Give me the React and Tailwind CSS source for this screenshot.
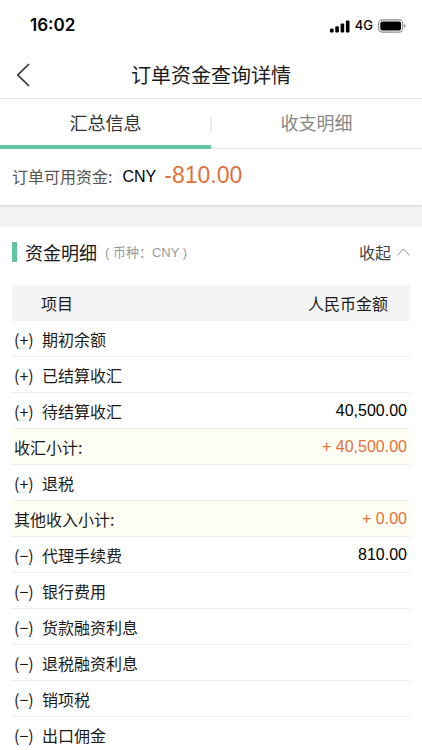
import { useState } from 'react';

const rows = [
  { sign: '+', name: '期初余额' },
  { sign: '+', name: '已结算收汇' },
  { sign: '+', name: '待结算收汇', amount: '40,500.00' },
  { subtotal: true, name: '收汇小计:', amount: '+ 40,500.00' },
  { sign: '+', name: '退税' },
  { subtotal: true, name: '其他收入小计:', amount: '+ 0.00' },
  { sign: '−', name: '代理手续费', amount: '810.00' },
  { sign: '−', name: '银行费用' },
  { sign: '−', name: '货款融资利息' },
  { sign: '−', name: '退税融资利息' },
  { sign: '−', name: '销项税' },
  { sign: '−', name: '出口佣金' },
];

const tabs = ['汇总信息', '收支明细'];

function StatusBar() {
  return (
    <div className="flex h-[52px] shrink-0 items-center justify-between pl-[30px] pr-4 text-black">
      <span className="font-['Inter',sans-serif] text-[17px] font-semibold">16:02</span>
      <div className="flex items-center gap-[5px]">
        <svg width="20" height="13" viewBox="0 0 20 13" fill="currentColor" aria-hidden="true">
          <rect x="0" y="8.5" width="3.6" height="4" rx="1" />
          <rect x="5.3" y="6.3" width="3.6" height="6.2" rx="1" />
          <rect x="10.6" y="3.6" width="3.6" height="8.9" rx="1" />
          <rect x="15.9" y="0.6" width="3.6" height="11.9" rx="1" />
        </svg>
        <span className="font-['Inter',sans-serif] text-[13px] font-medium">4G</span>
        <svg width="28" height="14" viewBox="0 0 28 14" aria-hidden="true">
          <rect x="0.6" y="0.9" width="24.2" height="12.2" rx="3.8" fill="none" stroke="#8f8f8f" strokeWidth="1.1" />
          <rect x="2.3" y="2.6" width="20.8" height="8.8" rx="2.2" fill="#000" />
          <path d="M26 5v4c.9-.4 1.4-1.1 1.4-2S26.9 5.4 26 5z" fill="#8f8f8f" />
        </svg>
      </div>
    </div>
  );
}

function NavBar() {
  return (
    <header className="grid h-[47px] shrink-0 grid-cols-[60px_1fr_60px] items-center border-b border-[#e6e6e6]">
      <button type="button" aria-label="返回" className="flex h-full items-center pl-4 text-[#333]">
        <svg width="14" height="24" viewBox="0 0 14 24" fill="none" stroke="currentColor" strokeWidth="1.7" aria-hidden="true">
          <path d="M13 1 1.8 12 13 23" />
        </svg>
      </button>
      <h1 className="text-center text-xl text-[#1a1a1a]">订单资金查询详情</h1>
    </header>
  );
}

function Tabs({ active, onChange }) {
  return (
    <div role="tablist" className="relative flex h-[50px] shrink-0">
      {tabs.map((label, i) => (
        <button
          key={label}
          type="button"
          role="tab"
          aria-selected={active === i}
          onClick={() => onChange(i)}
          className={`h-full flex-1 text-lg ${active === i ? 'border-b-4 border-[#62c6a4] text-[#333]' : 'border-b border-[#e6e6e6] pb-[3px] text-[#888]'}`}
        >
          {label}
        </button>
      ))}
      <span className="absolute top-[18px] left-1/2 h-4 w-px -translate-x-1/2 bg-[#dcdcdc]" />
    </div>
  );
}

function DetailTable() {
  return (
    <table className="w-full border-separate border-spacing-0 text-base text-[#1a1a1a]">
      <thead>
        <tr className="h-9 bg-[#f4f4f4]">
          <th scope="col" className="p-0 pl-[29px] text-left font-normal">项目</th>
          <th scope="col" className="p-0 pr-[22px] text-right font-normal">人民币金额</th>
        </tr>
      </thead>
      <tbody>
        {rows.map((row) => (
          <tr key={row.name} className={`h-9 ${row.subtotal ? 'bg-[#fffef4]' : ''}`}>
            <td className="border-b border-[#efefef] p-0 pl-[2px]">
              {row.sign && <span className="inline-block w-7">({row.sign})</span>}
              {row.name}
            </td>
            <td
              className={`border-b border-[#efefef] p-0 pr-[3px] text-right font-['Liberation_Sans',Arial,sans-serif] ${row.subtotal ? 'text-[#e0713a]' : 'text-black'}`}
            >
              {row.amount}
            </td>
          </tr>
        ))}
      </tbody>
    </table>
  );
}

export default function App() {
  const [tab, setTab] = useState(0);
  const [open, setOpen] = useState(true);

  return (
    <div className="flex h-screen flex-col bg-white font-['Noto_Sans_CJK_SC',sans-serif]">
      <StatusBar />
      <NavBar />
      <Tabs active={tab} onChange={setTab} />

      <main className="flex-1 overflow-y-auto bg-[#f3f3f3] [scrollbar-width:none]">
        <section className="flex h-14 items-center bg-white px-3 shadow-sm">
          <span className="pb-[2px] text-base text-[#555]">订单可用资金:</span>
          <span className="ml-[10px] font-['Liberation_Sans',Arial,sans-serif] text-base text-black">CNY</span>
          <span className="ml-2 pb-1 font-['Liberation_Sans',Arial,sans-serif] text-[23px] text-[#e0713a]">-810.00</span>
        </section>

        <section className="mt-[22px] bg-white px-3">
          <div className="flex h-[58px] items-center pb-2">
            <span className="h-5 w-[5px] bg-[#62c6a4]" />
            <h2 className="ml-2 text-lg text-[#1a1a1a]">资金明细</h2>
            <span className="ml-2 pt-[2px] font-['Liberation_Sans','Noto_Sans_CJK_SC',sans-serif] text-[13px] text-[#999]">
              ( 币种：CNY )
            </span>
            <button
              type="button"
              aria-expanded={open}
              onClick={() => setOpen(!open)}
              className="ml-auto flex items-center gap-[6px] text-base text-[#444]"
            >
              收起
              <svg width="13" height="8" viewBox="0 0 13 8" fill="none" stroke="#888" strokeWidth="1" className={open ? '' : 'rotate-180'} aria-hidden="true">
                <path d="M.5 7.4 6.5.9l6 6.5" />
              </svg>
            </button>
          </div>
          {open && <DetailTable />}
        </section>
      </main>
    </div>
  );
}
